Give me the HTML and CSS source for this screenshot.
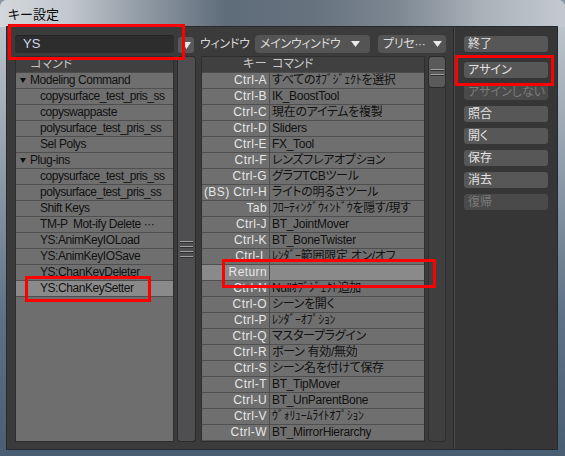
FILE: index.html
```html
<!DOCTYPE html>
<html lang="ja">
<head>
<meta charset="utf-8">
<title>キー設定</title>
<link rel="stylesheet" href="styles.css">
</head>
<body>
<div class="window">
  <div class="titlebar"><span class="title">キー設定</span></div>
  <div class="frame">
    <div class="client">
      <div class="main">
        <div class="toolbar">
          <div class="search">YS</div>
          <div class="arrowbtn"><svg width="9" height="7" viewBox="0 0 9 7"><path d="M0 0H9L4.5 7Z" fill="#e8e8e8"/></svg></div>
          <span class="label">ウィンドウ</span>
          <div class="dropdown dd-window"><span class="ddtext">メインウィンドウ</span><svg width="9" height="6" viewBox="0 0 9 6"><path d="M0 0H9L4.5 6Z" fill="#e8e8e8"/></svg></div>
          <div class="dropdown dd-preset"><span class="ddtext">プリセ···</span><svg width="9" height="6" viewBox="0 0 9 6"><path d="M0 0H9L4.5 6Z" fill="#e8e8e8"/></svg></div>
        </div>
        <div class="lists">
          <div class="list cmdlist">
            <div class="head"><span class="headcmd">コマンド</span></div>
            <div class="row cat"><svg class="caret" width="6" height="5" viewBox="0 0 6 5"><path d="M0 0H6L3 5Z" fill="#111"/></svg>Modeling Command</div>
            <div class="row child">copysurface_test_pris_ss</div>
            <div class="row child">copyswappaste</div>
            <div class="row child">polysurface_test_pris_ss</div>
            <div class="row child">Sel Polys</div>
            <div class="row cat"><svg class="caret" width="6" height="5" viewBox="0 0 6 5"><path d="M0 0H6L3 5Z" fill="#111"/></svg>Plug-ins</div>
            <div class="row child">copysurface_test_pris_ss</div>
            <div class="row child">polysurface_test_pris_ss</div>
            <div class="row child">Shift Keys</div>
            <div class="row child">TM-P  Mot-ify Delete ···</div>
            <div class="row child">YS:AnimKeyIOLoad</div>
            <div class="row child">YS:AnimKeyIOSave</div>
            <div class="row child">YS:ChanKeyDeleter</div>
            <div class="row child selected">YS:ChanKeySetter</div>
          </div>
          <div class="vscroll vs-left">
            <div class="thumb thumb-full"><span class="grip"></span><span class="grip"></span><span class="grip"></span><span class="grip"></span></div>
          </div>
          <div class="list keytable">
            <div class="trow head"><span class="kcell">キー</span><span class="ccell">コマンド</span></div>
            <div class="trow"><span class="kcell">Ctrl-A</span><span class="ccell">すべてのｵﾌﾞｼﾞｪｸﾄを選択</span></div>
            <div class="trow"><span class="kcell">Ctrl-B</span><span class="ccell">IK_BoostTool</span></div>
            <div class="trow"><span class="kcell">Ctrl-C</span><span class="ccell">現在のアイテムを複製</span></div>
            <div class="trow"><span class="kcell">Ctrl-D</span><span class="ccell">Sliders</span></div>
            <div class="trow"><span class="kcell">Ctrl-E</span><span class="ccell">FX_Tool</span></div>
            <div class="trow"><span class="kcell">Ctrl-F</span><span class="ccell">レンズフレアオプション</span></div>
            <div class="trow"><span class="kcell">Ctrl-G</span><span class="ccell">グラフTCBツール</span></div>
            <div class="trow"><span class="kcell">(BS) Ctrl-H</span><span class="ccell">ライトの明るさツール</span></div>
            <div class="trow"><span class="kcell">Tab</span><span class="ccell">ﾌﾛｰﾃｨﾝｸﾞｳｨﾝﾄﾞｳを隠す/現す</span></div>
            <div class="trow"><span class="kcell">Ctrl-J</span><span class="ccell">BT_JointMover</span></div>
            <div class="trow"><span class="kcell">Ctrl-K</span><span class="ccell">BT_BoneTwister</span></div>
            <div class="trow"><span class="kcell">Ctrl-L</span><span class="ccell">ﾚﾝﾀﾞｰ範囲限定 オン/オフ</span></div>
            <div class="trow selected"><span class="kcell">Return</span><span class="ccell"></span></div>
            <div class="trow"><span class="kcell">Ctrl-N</span><span class="ccell">Nullｵﾌﾞｼﾞｪｸﾄ追加</span></div>
            <div class="trow"><span class="kcell">Ctrl-O</span><span class="ccell">シーンを開く</span></div>
            <div class="trow"><span class="kcell">Ctrl-P</span><span class="ccell">ﾚﾝﾀﾞｰｵﾌﾟｼｮﾝ</span></div>
            <div class="trow"><span class="kcell">Ctrl-Q</span><span class="ccell">マスタープラグイン</span></div>
            <div class="trow"><span class="kcell">Ctrl-R</span><span class="ccell">ボーン 有効/無効</span></div>
            <div class="trow"><span class="kcell">Ctrl-S</span><span class="ccell">シーン名を付けて保存</span></div>
            <div class="trow"><span class="kcell">Ctrl-T</span><span class="ccell">BT_TipMover</span></div>
            <div class="trow"><span class="kcell">Ctrl-U</span><span class="ccell">BT_UnParentBone</span></div>
            <div class="trow"><span class="kcell">Ctrl-V</span><span class="ccell">ｳﾞｫﾘｭｰﾑﾗｲﾄｵﾌﾟｼｮﾝ</span></div>
            <div class="trow"><span class="kcell">Ctrl-W</span><span class="ccell">BT_MirrorHierarchy</span></div>
          </div>
          <div class="vscroll vs-right">
            <div class="thumb thumb-small"><span class="grip"></span><span class="grip"></span></div>
          </div>
        </div>
      </div>
      <div class="divider"></div>
      <div class="side">
        <div class="btn">終了</div>
        <div class="btn btn-assign">アサイン</div>
        <div class="btn disabled">アサインしない</div>
        <div class="btn">照合</div>
        <div class="btn">開く</div>
        <div class="btn">保存</div>
        <div class="btn">消去</div>
        <div class="btn disabled">復帰</div>
      </div>
    </div>
  </div>
  <div class="mark mark-search"></div>
  <div class="mark mark-assign"></div>
  <div class="mark mark-setter"></div>
  <div class="mark mark-return"></div>
</div>
</body>
</html>
```

FILE: styles.css
```css
* { box-sizing: border-box; }
html, body { margin: 0; padding: 0; background: #8a96a2; }
body {
  font-family: "Liberation Sans", "Noto Sans CJK JP", sans-serif;
  font-size: 12px;
  font-feature-settings: "palt";
}
.window {
  position: relative;
  width: 565px;
  height: 456px;
  overflow: hidden;
  border-radius: 7px 7px 0 0;
  background: linear-gradient(180deg, #c4cad0 0%, #9aa6b2 30%, #5d7084 70%, #4a5e73 100%);
}
.titlebar {
  height: 27px;
  padding: 5px 0 0 8px;
  background: linear-gradient(90deg, #d3d7db 0%, #c2c8ce 12%, #8d98a3 26%, #5f6c79 40%, #66727e 55%, #7c8792 70%, #a9b1b9 85%, #c3c9cf 100%);
}
.title {
  font-family: "Noto Sans CJK JP", sans-serif;
  font-size: 13px;
  line-height: 17px;
  color: #0a0a0a;
}
.frame {
  padding: 0 8px 7px 7px;
  border-bottom: 2px solid #b6c2ce;
}
.client {
  display: flex;
  height: 422px;
  background: #3b3b3b;
  box-shadow: 0 0 0 1px #262a30;
}
.main {
  width: 446px;
  display: flex;
  flex-direction: column;
}
.toolbar {
  height: 30px;
  padding: 8px 0 0 8px;
  display: flex;
  align-items: flex-start;
}
.search {
  width: 159px;
  height: 18px;
  border-radius: 4px;
  background: #2d2d2d;
  box-shadow: inset 0 1px 0 #242424;
  color: #cdd9ee;
  font-size: 13px;
  line-height: 18px;
  padding-left: 8px;
}
.arrowbtn {
  width: 16px;
  height: 16px;
  margin: 2px 0 0 4px;
  border-radius: 3px;
  background: #5a5a5a;
  display: flex;
  align-items: center;
  justify-content: center;
}
.label {
  width: 55px;
  margin-left: 6px;
  color: #d8d8d8;
  line-height: 18px;
  white-space: nowrap;
  letter-spacing: -0.3px;
}
.dropdown {
  height: 18px;
  border-radius: 4px;
  background: #545454;
  display: flex;
  align-items: center;
  justify-content: space-between;
  padding: 0 5px 0 5px;
  color: #dcdcdc;
  white-space: nowrap;
}
.ddtext { line-height: 18px; letter-spacing: -0.3px; }
.dd-window { width: 115px; padding-right: 10px; }
.dd-preset { width: 68px; margin-left: 8px; padding-right: 4px; }
.lists {
  height: 384px;
  display: flex;
  padding-left: 9px;
}
.list {
  background: #6e6e6e;
  box-shadow: 0 0 0 1px #2e2e2e;
  overflow: hidden;
}
.cmdlist { width: 157px; }
.head {
  height: 16px;
  background: #404040;
  border-bottom: 1px solid #4c4c4c;
  color: #c4c4c4;
  line-height: 15px;
}
.headcmd { padding-left: 14px; }
.row {
  height: 16px;
  line-height: 15px;
  border-bottom: 1px solid #4f4f4f;
  color: #111;
  white-space: pre;
  background: #6f6f6f;
  letter-spacing: -0.45px;
}
.row.cat { padding-left: 4px; }
.row.child { padding-left: 24px; }
.caret { margin-right: 4px; vertical-align: 1px; }
.selected { background: #8a8a8a; }
.vscroll {
  height: 384px;
  border-radius: 3px;
}
.vs-left {
  width: 17px;
  margin-left: 5px;
}
.thumb {
  border-radius: 3px;
  background: #4f4f51;
  box-shadow: 0 0 0 1px #2c2c2c;
  display: flex;
  flex-direction: column;
  align-items: center;
  justify-content: center;
  gap: 4px;
}
.thumb-full { height: 384px; }
.grip {
  width: 13px;
  height: 1px;
  background: #a0a0a0;
  box-shadow: 0 1px 0 #2e2e2e;
}
.keytable {
  width: 222px;
  margin-left: 7px;
}
.trow {
  display: flex;
  height: 16px;
  line-height: 15px;
  border-bottom: 1px solid #4f4f4f;
  background: #6f6f6f;
}
.trow.head { background: #404040; border-bottom-color: #4c4c4c; }
.trow.selected { background: #8a8a8a; }
.kcell {
  width: 68px;
  flex: none;
  text-align: right;
  padding-right: 2px;
  color: #e6e6e6;
  border-right: 1px solid #4f4f4f;
  white-space: nowrap;
  letter-spacing: 0.4px;
}
.ccell {
  padding-left: 2px;
  color: #111;
  white-space: nowrap;
  overflow: hidden;
  letter-spacing: -0.3px;
}
.trow.head .kcell, .trow.head .ccell { color: #c8c8c8; border-right-color: #404040; }
.vs-right {
  width: 16px;
  margin-left: 5px;
  background: #3f3f3f;
  box-shadow: 0 0 0 1px #2e2e2e;
}
.thumb-small {
  height: 30px;
  background: #5a5a5a;
}
.divider {
  width: 2px;
  background: linear-gradient(90deg, #2a2a2a 0 1px, #4a4a4a 1px 2px);
}
.side {
  width: 102px;
  background: #363636;
  padding: 9px 9px 0 9px;
}
.btn {
  width: 84px;
  height: 16px;
  margin-top: 6px;
  border-radius: 3px;
  background: #575757;
  color: #e2e2e2;
  line-height: 16px;
  padding-left: 4px;
  font-size: 12px;
}
.btn:first-child { margin-top: 0; }
.btn-assign { margin-top: 10px; }
.btn.disabled { background: #4a4a4a; color: #7a7a7a; }
.mark {
  position: absolute;
  border: 3px solid #ff0000;
}
.mark-search { left: 8px; top: 24px; width: 177px; height: 36px; }
.mark-assign { left: 455px; top: 55px; width: 99px; height: 31px; }
.mark-setter { left: 25px; top: 276px; width: 126px; height: 26px; }
.mark-return { left: 222px; top: 259px; width: 214px; height: 29px; }
```
